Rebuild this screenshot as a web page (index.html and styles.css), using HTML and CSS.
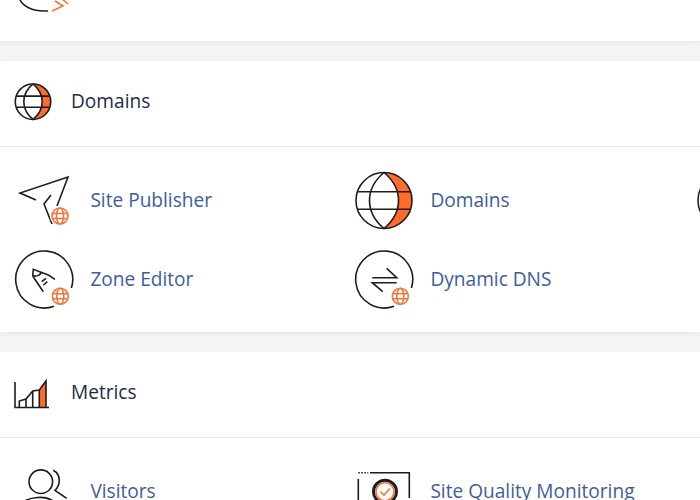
FILE: index.html
```html
<!DOCTYPE html>
<html lang="en">
<head>
    <meta charset="UTF-8" />
    <title>Tools</title>
    <link rel="stylesheet" href="styles.css">
</head>
<body>
    <svg class="defs" width="0" height="0">
        <symbol id="globe" viewBox="0 0 60 60">
            <path class="fill-orange" d="M30 1.500 A28 28 0 0 1 30 57.500 C39 50 44.500 40 44.500 29.500 C44.500 19 39 9 30 1.500Z" />
            <circle class="ink" cx="30" cy="29.500" r="28" />
            <path class="ink" d="M3.800 20.700 H56.200 M3.800 38.300 H56.200 M30 1.500 C21 9 15.500 19 15.500 29.500 C15.500 40 21 50 30 57.500 C39 50 44.500 40 44.500 29.500 C44.500 19 39 9 30 1.500" />
        </symbol>
        <symbol id="mini-globe" viewBox="0 0 20 20">
            <circle class="halo" cx="10" cy="10" r="10" />
            <circle class="line-orange" cx="10" cy="10" r="8" />
            <ellipse class="line-orange" cx="10" cy="10" rx="3.500" ry="8" />
            <path class="line-orange" d="M2.500 7.500 H17.500 M2.500 12.500 H17.500" />
        </symbol>
    </svg>

    <div class="card top-card">
        <svg class="top-icon" width="60" height="14" viewBox="0 0 60 14">
            <path class="ink" d="M6 0 C9 6 18 11 30 11 H34" />
            <path class="line-orange" d="M38 11 L49 6 L41 1 M48 -1 L54 4" />
        </svg>
    </div>

    <section class="card">
        <header class="card-head">
            <svg class="head-icon" width="38" height="38"><use href="#globe" /></svg>
            <h2>Domains</h2>
        </header>
        <div class="tiles">
            <a class="tile">
                <svg class="tile-icon" viewBox="0 0 60 60">
                    <path class="ink" d="M22 29 L6 22 L54 6 L43 35 M37 24 L30 33 L38 53" />
                    <use href="#mini-globe" x="36" y="35" width="20" height="20" />
                </svg>
                <span>Site Publisher</span>
            </a>
            <a class="tile">
                <svg class="tile-icon" width="60" height="60"><use href="#globe" /></svg>
                <span>Domains</span>
            </a>
            <a class="tile">
                <svg class="tile-icon" viewBox="0 0 60 60"><circle class="ink" cx="32" cy="29.500" r="28" /></svg>
            </a>
            <a class="tile">
                <svg class="tile-icon" viewBox="0 0 60 60">
                    <path class="ink" d="M40 56.250 A28.500 28.500 0 1 1 57.400 38" />
                    <path class="ink" d="M18.700 26 L19.300 19.300 L34.300 25 L41 29.300 M18.700 26 L29.300 41.700 M18.700 26 C24 26.500 27.500 24.500 26.700 21.700 M27.700 31.700 L32 28.300 M29.300 35 L33.300 31.700" />
                    <use href="#mini-globe" x="36.300" y="36.300" width="20" height="20" />
                </svg>
                <span>Zone Editor</span>
            </a>
            <a class="tile">
                <svg class="tile-icon" viewBox="0 0 60 60">
                    <path class="ink" d="M40 56.250 A28.500 28.500 0 1 1 57.400 38" />
                    <path class="ink" d="M18.300 27.700 H42.700 L32.700 18.300 M42.700 32.700 H18.300 L28.700 41.700" />
                    <use href="#mini-globe" x="36.300" y="36.300" width="20" height="20" />
                </svg>
                <span>Dynamic DNS</span>
            </a>
        </div>
    </section>

    <section class="card">
        <header class="card-head">
            <svg class="metrics-icon" viewBox="0 0 38 38">
                <path class="fill-orange" d="M25.300 16 L32 7 V33.500 H25.300Z" />
                <path class="ink" d="M1 8 V33.500 H35 M5.300 33.500 V27 L12 25 L18.700 17 L25.300 16 L32 7 V33.500 M12 25 V33.500 M18.700 17 V33.500 M25.300 16 V33.500" />
            </svg>
            <h2>Metrics</h2>
        </header>
        <div class="tiles">
            <a class="tile">
                <svg class="tile-icon" viewBox="0 0 60 60">
                    <circle class="ink" cx="26.800" cy="19.700" r="11.800" />
                    <path class="ink" d="M39.300 8.300 C44 11 45.300 15 45.300 18.300 C45.300 22 43.500 26 41 28.300 L52.700 36.300 M6 43 C12 35 30 33 38 38.500" />
                </svg>
                <span>Visitors</span>
            </a>
            <a class="tile">
                <svg class="tile-icon" viewBox="0 0 60 60">
                    <path class="ink" d="M16 10.700 H55.300 V36 M4.300 17 V60" />
                    <path class="ink dots" d="M4.300 10.700 H14.300" />
                    <circle class="ring" cx="31" cy="29.700" r="11.500" />
                    <circle class="line-orange" cx="31" cy="29.700" r="9" />
                    <path class="line-orange" d="M26.500 29.700 L30 33 L36 26.500" />
                </svg>
                <span>Site Quality Monitoring</span>
            </a>
        </div>
    </section>
</body>
</html>
```

FILE: styles.css
```css
body {
    margin: 0;
    height: 500px;
    overflow: hidden;
    background: #f3f4f6;
    font-family: "Open Sans", sans-serif;
    display: flex;
    flex-direction: column;
    gap: 20px;
}

.defs {
    position: absolute;
}

.card {
    flex: none;
    background: #fff;
    box-shadow: 0 2px 6px rgba(30, 40, 60, 0.06);
}

.top-card {
    height: 41px;
    padding-left: 14px;
}

.top-icon {
    display: block;
}

.card-head {
    box-sizing: border-box;
    height: 86px;
    display: flex;
    align-items: center;
    gap: 19px;
    padding: 0 0 3px 14px;
    border-bottom: 1px solid #e4e7ef;
}

.card-head h2 {
    margin: 0 0 2px;
    font-size: 19.100px;
    font-weight: 400;
    color: #1b2d4a;
}

.head-icon,
.metrics-icon {
    width: 38px;
    height: 38px;
}

.head-icon {
    --ink-width: 2.500;
}

.tiles {
    display: grid;
    grid-template-columns: repeat(3, 340px);
    grid-auto-rows: 79px;
    padding: 14px 0 13px;
}

.tile {
    display: flex;
    align-items: center;
    gap: 16.400px;
    padding-left: 14px;
    font-size: 19.100px;
    color: #3f5d9b;
    white-space: nowrap;
}

.tile span {
    padding-bottom: 2px;
}

.tile-icon {
    flex: none;
    width: 60px;
    height: 60px;
}

.ink {
    fill: none;
    stroke: #1d1d1f;
    stroke-width: var(--ink-width, 1.600);
}

.dots {
    stroke-dasharray: 1.500 1.500;
}

.ring {
    fill: #fff;
    stroke: #1d1d1f;
    stroke-width: 3;
}

.line-orange {
    fill: none;
    stroke: #f4763a;
    stroke-width: 1.600;
}

.fill-orange {
    fill: #ff6c2c;
}

.halo {
    fill: #fff;
}
```
